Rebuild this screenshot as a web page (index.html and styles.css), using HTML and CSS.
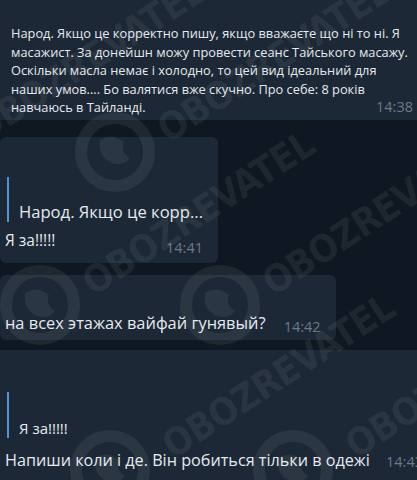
FILE: index.html
```html
<!DOCTYPE html>
<html lang="uk">
<head>
  <meta charset="UTF-8">
  <title>Чат</title>
  <link rel="stylesheet" href="styles.css">
</head>
<body>

  <div class="chat">
    <div class="bubble bubble-wide bubble-first">
      Народ. Якщо це корректно пишу, якщо вважаєте що ні то ні. Я масажист. За донейшн можу провести сеанс Тайського масажу. Оскільки масла немає і холодно, то цей вид ідеальний для наших умов.... Бо валятися вже скучно. Про себе: 8 років навчаюсь в Тайланді.<span class="time">14:38</span>
    </div>

    <div class="bubble bubble-reply">
      <div class="quote">Народ. Якщо це корр...</div>
      <div class="text">Я за!!!!!<span class="time">14:41</span></div>
    </div>

    <div class="bubble bubble-plain">
      <div class="text">на всех этажах вайфай гунявый?<span class="time">14:42</span></div>
    </div>

    <div class="bubble bubble-wide bubble-last">
      <div class="quote">Я за!!!!!</div>
      <div class="text">Напиши коли і де. Він робиться тільки в одежі<span class="time">14:43</span></div>
    </div>
  </div>

  <!-- watermark over the whole shot -->
  <svg class="watermark" width="417" height="480" viewBox="0 0 417 480">
    <g class="wm-logo">
      <circle cx="-70" cy="152" r="34"/>
      <circle cx="115" cy="152" r="34"/>
      <circle cx="40" cy="305" r="34"/>
      <circle cx="220" cy="305" r="34"/>
      <circle cx="110" cy="470" r="34"/>
      <circle cx="293" cy="470" r="34"/>
    </g>
    <g class="wm-globe">
      <path d="M100 140 q12 -8 24 2 q-4 10 6 16 q-8 10 -20 4 q-12 -6 -10 -22z"/>
      <path d="M25 293 q12 -8 24 2 q-4 10 6 16 q-8 10 -20 4 q-12 -6 -10 -22z"/>
      <path d="M205 293 q12 -8 24 2 q-4 10 6 16 q-8 10 -20 4 q-12 -6 -10 -22z"/>
      <path d="M95 458 q12 -8 24 2 q-4 10 6 16 q-8 10 -20 4 q-12 -6 -10 -22z"/>
      <path d="M278 458 q12 -8 24 2 q-4 10 6 16 q-8 10 -20 4 q-12 -6 -10 -22z"/>
    </g>
    <g class="wm-text">
      <text transform="translate(90 62) rotate(-33)" textLength="268">OBOZREVATEL</text>
      <text transform="translate(275 62) rotate(-33)" textLength="268">OBOZREVATEL</text>
      <text transform="translate(200 215) rotate(-33)" textLength="268">OBOZREVATEL</text>
      <text transform="translate(380 215) rotate(-33)" textLength="268">OBOZREVATEL</text>
      <text transform="translate(280 378) rotate(-33)" textLength="268">OBOZREVATEL</text>
      <text transform="translate(463 378) rotate(-33)" textLength="268">OBOZREVATEL</text>
    </g>
  </svg>

</body>
</html>
```

FILE: styles.css
```css
html, body {
  margin: 0;
  height: 100%;
}
body {
  position: relative;
  overflow: hidden;
  background: #0f1822;
  color: #e6eaee;
  font-family: 'Open Sans', 'Noto Sans', sans-serif;
  font-size: 16.4px;
  line-height: 20px;
}
.chat {
  display: flex;
  flex-direction: column;
  align-items: flex-start;
}
.bubble {
  background: #1c2836;
  border-radius: 6px;
  padding: 0 15px 0 5px;
  box-sizing: border-box;
}
.bubble-wide {
  width: 100%;
  border-radius: 0;
}
.bubble-first {
  padding: 24px 4px 3px 11px;
  height: 120px;
  font-size: 12.8px;
  line-height: 18.5px;
}
.bubble-reply {
  margin-top: 17px;
  padding-top: 40px;
  padding-bottom: 5px;
}
.bubble-plain {
  margin-top: 12px;
  padding-top: 38px;
  padding-bottom: 3px;
}
.bubble-last {
  width: 438px;
  margin-top: 10px;
  padding-top: 42px;
  height: 140px;
}
.quote {
  margin-left: 2px;
  padding: 25px 0 0 10px;
  border-left: 2px solid #4f93d6;
  font-size: 16.6px;
}
.bubble-last .quote {
  font-size: 15px;
  padding-top: 26px;
}
.text {
  margin-top: 8px;
}
.bubble-reply .text {
  font-size: 15.5px;
}
.bubble-plain .text {
  margin-top: 0;
}
.bubble-last .text {
  margin-top: 12px;
  font-size: 16.2px;
}
.time {
  float: right;
  margin: 4px 0 0 18px;
  color: #6a7a8a;
  font-size: 14.5px;
}
.bubble-first .time {
  margin-top: 0;
  line-height: 18.5px;
}
.bubble-reply .time {
  margin-top: 8px;
}
.bubble-last .time {
  margin: 2px 0 0 12px;
}
.watermark {
  position: absolute;
  left: 0;
  top: 0;
  pointer-events: none;
}
.wm-logo circle {
  fill: none;
  stroke: rgba(255, 255, 255, 0.065);
  stroke-width: 12;
}
.wm-globe path {
  fill: rgba(255, 255, 255, 0.065);
}
.wm-text text {
  fill: rgba(255, 255, 255, 0.065);
  font-family: 'DejaVu Sans', sans-serif;
  font-stretch: condensed;
  font-weight: bold;
  font-size: 38px;
  text-anchor: middle;
  dominant-baseline: middle;
}
```
